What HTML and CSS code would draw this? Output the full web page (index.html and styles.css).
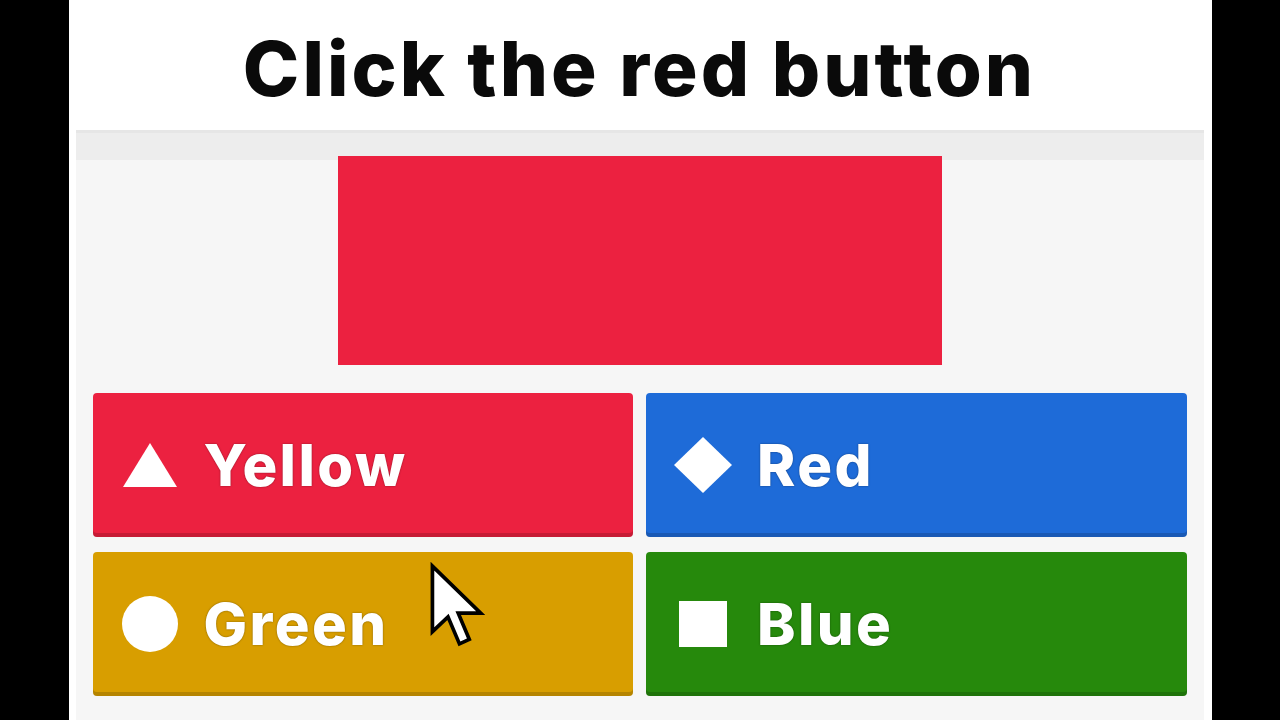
FILE: index.html
```html
<!DOCTYPE html>
<html>
<head>
<meta charset="utf-8">
<link rel="stylesheet" href="styles.css">
</head>
<body>
<div class="page">
  <header class="header"><h1 class="title">Click the red button</h1></header>
  <main class="panel">
    <div class="target"></div>
    <div class="answers">
      <div class="answer red">
        <span class="icon"><svg width="56" height="46" viewBox="0 0 56 46"><polygon points="28,1 55,45 1,45" fill="#fff"/></svg></span>
        <span class="label">Yellow</span>
      </div>
      <div class="answer blue">
        <span class="icon"><svg width="60" height="58" viewBox="0 0 60 58"><polygon points="30,1 59,29 30,57 1,29" fill="#fff"/></svg></span>
        <span class="label">Red</span>
      </div>
      <div class="answer gold">
        <span class="icon"><svg width="56" height="56" viewBox="0 0 56 56"><circle cx="28" cy="28" r="28" fill="#fff"/></svg></span>
        <span class="label">Green</span>
      </div>
      <div class="answer green">
        <span class="icon"><svg width="48" height="46" viewBox="0 0 48 46"><rect x="0" y="0" width="48" height="46" fill="#fff"/></svg></span>
        <span class="label">Blue</span>
      </div>
    </div>
  </main>
  <svg class="cursor" width="58" height="86" viewBox="0 0 14 21"><path d="M1,1 L1,17 L4.8,13.4 L7.6,20 L10,18.9 L7.3,12.5 L12.8,12.5 Z" fill="#fff" stroke="#000" stroke-width="0.9" stroke-linejoin="miter"/></svg>
</div>
</body>
</html>
```
FILE: styles.css
```css
html, body {
  margin: 0;
  padding: 0;
  background: #000;
  height: 100%;
  overflow: hidden;
}
.page {
  position: relative;
  width: 1143px;
  height: 720px;
  margin: 0 auto;
  background: #fff;
  padding: 0 8px 0 7px;
  box-sizing: border-box;
  display: flex;
  flex-direction: column;
  font-family: "Inter", "Noto Sans", sans-serif;
}
.header {
  height: 130px;
  display: flex;
  align-items: center;
  justify-content: center;
}
.title {
  margin: 6px 0 0;
  font-size: 76px;
  font-weight: 800;
  letter-spacing: 3px;
  color: #0a0a0a;
}
.panel {
  flex: 1;
  background: linear-gradient(#ededed 0, #ededed 27px, #f6f6f6 27px);
  border-top: 3px solid #e6e6e6;
  padding: 23px 17px 0;
  display: flex;
  flex-direction: column;
  align-items: center;
}
.target {
  width: 604px;
  height: 209px;
  background: #ec2140;
}
.answers {
  margin-top: 28px;
  align-self: stretch;
  display: grid;
  grid-template-columns: 1fr 1fr;
  column-gap: 13px;
  row-gap: 15px;
}
.answer {
  height: 144px;
  border-radius: 4px;
  display: flex;
  align-items: center;
  padding-left: 27px;
  gap: 24px;
  box-shadow: inset 0 -4px 0 rgba(0,0,0,0.16);
}
.icon {
  width: 60px;
  display: flex;
  justify-content: center;
  align-items: center;
}
.icon svg { display: block; }
.label {
  color: #fff;
  font-size: 58px;
  font-weight: 800;
  letter-spacing: 2.4px;
  text-shadow: 0 0 2px rgba(0,0,0,0.45);
}
.red { background: #ec2140; }
.blue { background: #1e6bd8; }
.gold { background: #d89e00; }
.green { background: #26890c; }
.cursor {
  position: absolute;
  left: 359px;
  top: 562px;
}
```
